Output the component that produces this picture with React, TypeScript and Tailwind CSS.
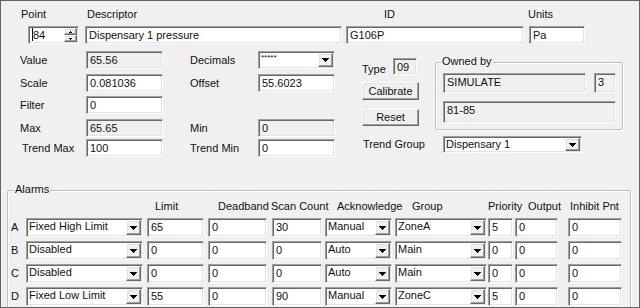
import React from "react";

const sunken =
  "border border-t-[#a0a0a0] border-l-[#a0a0a0] border-r-[#ffffff] border-b-[#ffffff] shadow-[inset_1px_1px_0_#696969,inset_-1px_-1px_0_#e3e3e3]";
const raised =
  "border border-t-[#ffffff] border-l-[#ffffff] border-r-[#696969] border-b-[#696969] shadow-[inset_-1px_-1px_0_#a0a0a0,inset_1px_1px_0_#e3e3e3] bg-[#f0f0f0]";

function Edit({
  cls,
  ro,
  children,
}: {
  cls: string;
  ro?: boolean;
  children?: React.ReactNode;
}) {
  return (
    <div
      className={`${sunken} ${ro ? "bg-[#f0f0f0]" : "bg-white"} shrink-0 pl-[3px] pt-[1px] leading-[14px] overflow-hidden whitespace-nowrap ${cls}`}
    >
      {children}
    </div>
  );
}

function Tri() {
  return (
    <svg width="7" height="4" viewBox="0 0 7 4" shapeRendering="crispEdges">
      <path d="M0 0h7v1h-1v1h-1v1h-1v1h-1v-1h-1v-1h-1v-1h-1z" fill="#000" />
    </svg>
  );
}

function SmallTri({ up }: { up?: boolean }) {
  return up ? (
    <svg width="3" height="2" viewBox="0 0 3 2" shapeRendering="crispEdges">
      <path d="M1 0h1v1h1v1h-3v-1h1z" fill="#000" />
    </svg>
  ) : (
    <svg width="3" height="2" viewBox="0 0 3 2" shapeRendering="crispEdges">
      <path d="M0 0h3v1h-1v1h-1v-1h-1z" fill="#000" />
    </svg>
  );
}

function Combo({ cls, children, tiny }: { cls: string; children?: React.ReactNode; tiny?: boolean }) {
  return (
    <div className={`${sunken} bg-white shrink-0 flex items-stretch ${cls}`}>
      <div
        className={`flex-1 pl-[2px] overflow-hidden whitespace-nowrap ${tiny ? "text-[8px] leading-[12px]" : "leading-[15px]"}`}
      >
        {children}
      </div>
      <div className={`${raised} w-[15px] flex items-center justify-center my-[1px] mr-[1px]`}>
        <Tri />
      </div>
    </div>
  );
}

function Spinner() {
  return (
    <div className={`${sunken} bg-white shrink-0 flex items-stretch w-[51px] h-[18px] ml-[27px]`}>
      <div className="flex-1 flex items-start pl-[3px] pt-[1px] leading-[14px]">
        <span className="w-[1px] h-[13px] bg-black" />
        <span>84</span>
      </div>
      <div className="w-[13px] flex flex-col my-[1px] mr-[1px]">
        <div className={`${raised} flex-1 flex items-center justify-center`}>
          <SmallTri up />
        </div>
        <div className={`${raised} flex-1 flex items-center justify-center`}>
          <SmallTri />
        </div>
      </div>
    </div>
  );
}

function Button({ cls, children }: { cls: string; children: React.ReactNode }) {
  return (
    <div className={`${raised} flex items-center justify-center shrink-0 ${cls}`}>{children}</div>
  );
}

function FieldRow({
  label,
  labelCls = "ml-[19px] w-[66px]",
  value,
  ro,
  label2,
  right,
  cls,
}: {
  label: string;
  labelCls?: string;
  value: string;
  ro?: boolean;
  label2?: string;
  right?: React.ReactNode;
  cls: string;
}) {
  return (
    <div className={`flex items-center h-[18px] ${cls}`}>
      <span className={`shrink-0 ${labelCls}`}>{label}</span>
      <Edit cls="w-[77px] h-[18px]" ro={ro}>
        {value}
      </Edit>
      {label2 !== undefined && <span className="shrink-0 ml-[27px] w-[68px]">{label2}</span>}
      {right}
    </div>
  );
}

type Alarm = {
  k: string;
  type: string;
  limit: string;
  dead: string;
  scan: string;
  ack: string;
  group: string;
  pri: string;
  out: string;
  inh: string;
};

const alarms: Alarm[] = [
  { k: "A", type: "Fixed High Limit", limit: "65", dead: "0", scan: "30", ack: "Manual", group: "ZoneA", pri: "5", out: "0", inh: "0" },
  { k: "B", type: "Disabled", limit: "0", dead: "0", scan: "0", ack: "Auto", group: "Main", pri: "0", out: "0", inh: "0" },
  { k: "C", type: "Disabled", limit: "0", dead: "0", scan: "0", ack: "Auto", group: "Main", pri: "0", out: "0", inh: "0" },
  { k: "D", type: "Fixed Low Limit", limit: "55", dead: "0", scan: "90", ack: "Manual", group: "ZoneC", pri: "5", out: "0", inh: "0" },
];

export default function App() {
  return (
    <div className="w-[640px] h-[308px] bg-[#f0f0f0] border border-[#646464] overflow-hidden font-['Liberation_Sans',Arial,sans-serif] text-[11px] text-[#111] flex flex-col">
      {/* header labels */}
      <div className="flex mt-[7px] h-[13px] leading-[13px]">
        <span className="ml-[20px] w-[66px]">Point</span>
        <span className="w-[297px]">Descriptor</span>
        <span className="w-[144px]">ID</span>
        <span>Units</span>
      </div>
      {/* first row */}
      <div className="flex mt-[5px]">
        <Spinner />
        <Edit cls="ml-[6px] w-[257px] h-[18px]">Dispensary 1 pressure</Edit>
        <Edit cls="ml-[4px] w-[178px] h-[18px]">G106P</Edit>
        <Edit cls="ml-[5px] w-[56px] h-[18px]">Pa</Edit>
      </div>

      {/* main block */}
      <div className="flex">
        <div className="w-[340px] shrink-0 flex flex-col">
          <FieldRow
            cls="mt-[7px]"
            label="Value"
            value="65.56"
            ro
            label2="Decimals"
            right={
              <Combo cls="w-[77px] h-[18px]" tiny>
                *****
              </Combo>
            }
          />
          <FieldRow
            cls="mt-[5px]"
            label="Scale"
            value="0.081036"
            label2="Offset"
            right={<Edit cls="w-[77px] h-[18px]">55.6023</Edit>}
          />
          <FieldRow cls="mt-[4px]" label="Filter" value="0" />
          <FieldRow
            cls="mt-[5px]"
            label="Max"
            value="65.65"
            ro
            label2="Min"
            right={
              <Edit cls="w-[77px] h-[18px]" ro>
                0
              </Edit>
            }
          />
          <FieldRow
            cls="mt-[2px]"
            label="Trend Max"
            labelCls="ml-[21px] w-[64px]"
            value="100"
            label2="Trend Min"
            right={<Edit cls="w-[77px] h-[18px]">0</Edit>}
          />
        </div>

        {/* right part */}
        <div className="flex flex-col">
          <div className="flex">
            <div className="ml-[21px] w-[73px] shrink-0 flex flex-col">
              <div className="flex mt-[14px] h-[17px]">
                <span className="w-[31px] pt-[5px] leading-[13px]">Type</span>
                <Edit cls="w-[24px] h-[17px]" ro>
                  09
                </Edit>
              </div>
              <Button cls="mt-[7px] w-[57px] h-[18px]">Calibrate</Button>
              <Button cls="mt-[9px] w-[57px] h-[17px]">Reset</Button>
            </div>
            <div className="relative mt-[18px] w-[188px] h-[68px] border border-[#c0c0c0] rounded-[2px] shadow-[inset_1px_1px_0_#fff,1px_1px_0_#fff] flex flex-col">
              <span className="absolute top-[-8px] left-[5px] px-[1px] bg-[#f0f0f0] leading-[13px]">
                Owned by
              </span>
              <div className="flex mt-[10px] ml-[7px]">
                <Edit cls="w-[143px] h-[20px]" ro>
                  SIMULATE
                </Edit>
                <Edit cls="ml-[8px] w-[22px] h-[20px]" ro>
                  3
                </Edit>
              </div>
              <Edit cls="mt-[8px] ml-[7px] w-[173px] h-[22px]" ro>
                81-85
              </Edit>
            </div>
          </div>
          <div className="flex items-center mt-[6px] h-[17px]">
            <span className="ml-[22px] w-[80px] shrink-0">Trend Group</span>
            <Combo cls="w-[139px] h-[17px]">Dispensary 1</Combo>
          </div>
        </div>
      </div>

      {/* Alarms */}
      <div className="relative shrink-0 mt-[33px] ml-[6px] w-[624px] h-[125px] border border-[#c0c0c0] rounded-[2px] shadow-[inset_1px_1px_0_#fff,1px_1px_0_#fff] flex flex-col">
        <span className="absolute top-[-8px] left-[6px] px-[1px] bg-[#f0f0f0] leading-[13px]">Alarms</span>
        <div className="flex mt-[9px] h-[13px] leading-[13px] whitespace-nowrap">
          <span className="ml-[147px] w-[63px]">Limit</span>
          <span className="w-[53px]">Deadband</span>
          <span className="w-[66px]">Scan Count</span>
          <span className="w-[75px]">Acknowledge</span>
          <span className="w-[76px]">Group</span>
          <span className="w-[40px]">Priority</span>
          <span className="w-[42px]">Output</span>
          <span>Inhibit Pnt</span>
        </div>
        <div className="flex flex-col gap-[4px] mt-[5px]">
          {alarms.map((a) => (
            <div key={a.k} className="flex items-center h-[19px]">
              <span className="ml-[3px] w-[15px] shrink-0">{a.k}</span>
              <Combo cls="w-[117px] h-[19px]">{a.type}</Combo>
              <Edit cls="ml-[4px] w-[57px] h-[19px]">{a.limit}</Edit>
              <Edit cls="ml-[4px] w-[59px] h-[19px]">{a.dead}</Edit>
              <Edit cls="ml-[5px] w-[50px] h-[19px]">{a.scan}</Edit>
              <Combo cls="ml-[3px] w-[67px] h-[19px]">{a.ack}</Combo>
              <Combo cls="ml-[3px] w-[92px] h-[19px]">{a.group}</Combo>
              <Edit cls="ml-[1px] w-[25px] h-[19px]">{a.pri}</Edit>
              <Edit cls="ml-[2px] w-[43px] h-[19px]">{a.out}</Edit>
              <Edit cls="ml-[10px] w-[54px] h-[19px]">{a.inh}</Edit>
            </div>
          ))}
        </div>
      </div>
    </div>
  );
}
